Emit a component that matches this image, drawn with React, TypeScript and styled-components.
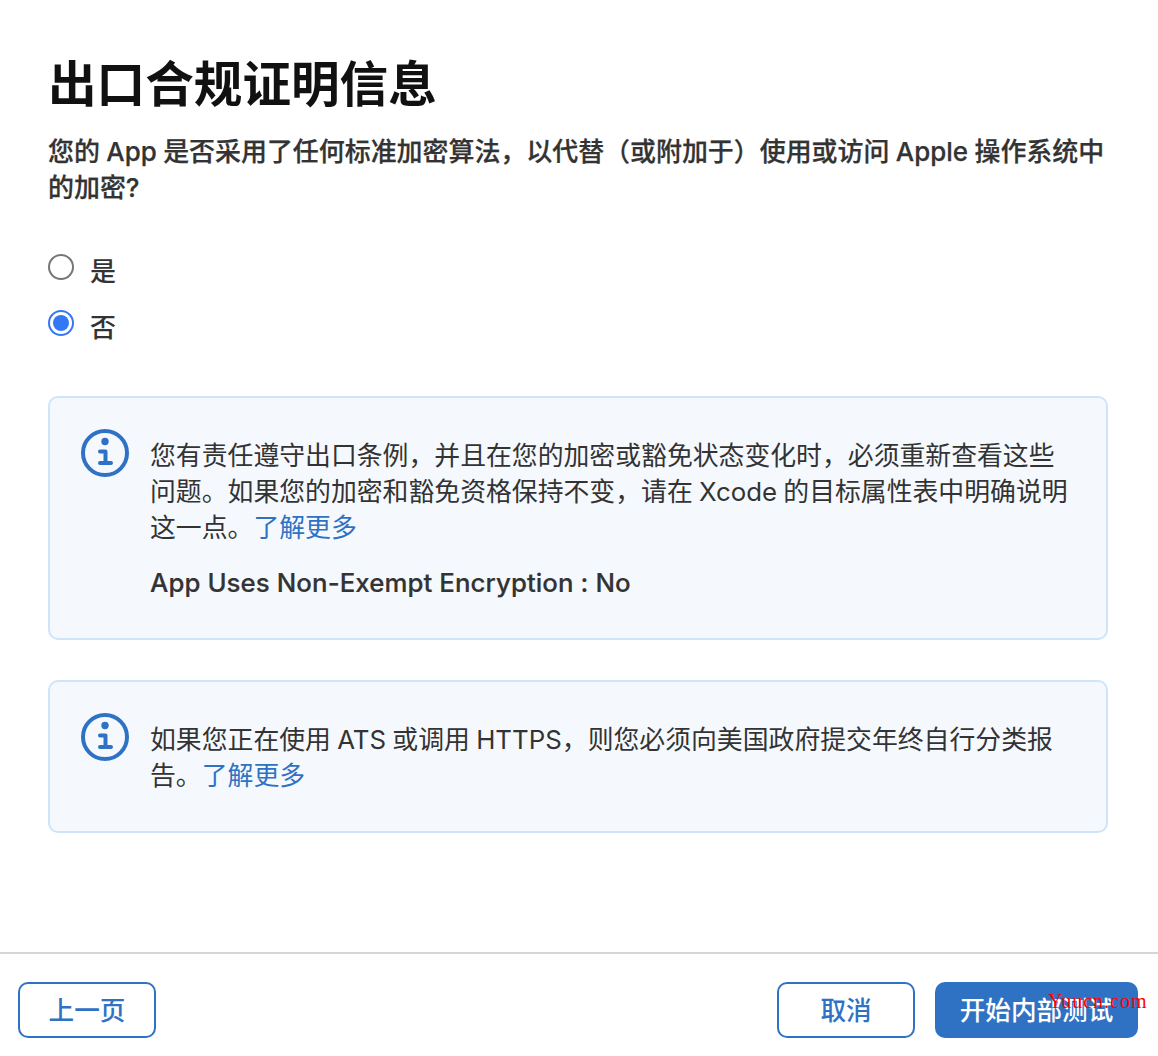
import React from 'react';
import styled, { createGlobalStyle } from 'styled-components';

const Global = createGlobalStyle`
  html, body { margin: 0; padding: 0; background: #fff; }
  body { font-family: Inter, "Noto Sans CJK SC", "Liberation Sans", sans-serif; color: #333; }
`;

const Page = styled.div`
  position: relative;
  width: 1158px;
  height: 1056px;
  display: flex;
  flex-direction: column;
  overflow: hidden;
`;

const Content = styled.main`
  flex: 1;
  padding: 55px 50px 0 48px;
`;

const Title = styled.h1`
  margin: 0;
  font-size: 48.6px;
  line-height: 60px;
  font-weight: 700;
  color: #111;
`;

const Question = styled.p`
  margin: 19px 0 0;
  font-size: 25.95px;
  line-height: 36px;
  font-weight: 500;
  word-spacing: -0.5px;
  color: #333;
  -webkit-text-stroke: 0.25px #333;
`;

const Options = styled.div`
  margin-top: 49px;
  display: flex;
  flex-direction: column;
  gap: 28px;
`;

const Option = styled.label`
  display: flex;
  align-items: center;
  gap: 16px;
  height: 28px;
  font-size: 26px;
  font-weight: 500;
  color: #333;
`;

const Radio = styled.span<{ $checked?: boolean }>`
  box-sizing: border-box;
  width: 26px;
  height: 26px;
  border-radius: 50%;
  border: 2px solid ${(p) => (p.$checked ? '#3478f6' : '#767676')};
  display: flex;
  align-items: center;
  justify-content: center;
  margin-top: -4px;
  &::after {
    content: '';
    display: ${(p) => (p.$checked ? 'block' : 'none')};
    width: 16px;
    height: 16px;
    border-radius: 50%;
    background: #3478f6;
  }
`;

const Notice = styled.section<{ $first?: boolean }>`
  box-sizing: border-box;
  margin-top: ${(p) => (p.$first ? '57px' : '40px')};
  display: flex;
  gap: 21px;
  padding: 31px 32px 37px 31px;
  background: #f5f9fe;
  border: 2px solid #cfe4fa;
  border-radius: 10px;
`;

const IconBox = styled.svg`
  flex: none;
  width: 48px;
  height: 48px;
  color: #2f72c4;
`;

const NoticeBody = styled.div`
  padding-top: 9px;
  font-size: 25.85px;
  line-height: 36px;
  word-spacing: -1px;
  color: #333;
`;

const Para = styled.p`
  margin: 0;
  & + & {
    margin-top: 19px;
    font-weight: 500;
    word-spacing: 0;
    letter-spacing: 0.06px;
    -webkit-text-stroke: 0.2px #333;
  }
`;

const LearnMore = styled.a`
  color: #2f72c4;
  text-decoration: none;
`;

const Footer = styled.footer`
  flex: none;
  height: 104px;
  box-sizing: border-box;
  border-top: 2px solid #d6d6d6;
  padding: 28px 20px 0 18px;
  display: flex;
  align-items: flex-start;
  justify-content: space-between;
`;

const Group = styled.div`
  display: flex;
  gap: 20px;
`;

const Button = styled.button<{ $primary?: boolean; $width: number }>`
  box-sizing: border-box;
  width: ${(p) => p.$width}px;
  height: 56px;
  border-radius: 10px;
  border: 2px solid #2f72c4;
  background: ${(p) => (p.$primary ? '#2f72c4' : '#fff')};
  color: ${(p) => (p.$primary ? '#fff' : '#2f72c4')};
  font-family: inherit;
  font-size: 25.6px;
  font-weight: 500;
  padding: 0 0 4px;
`;

const Watermark = styled.span`
  position: absolute;
  left: 1048px;
  top: 991px;
  font-family: "Liberation Serif", serif;
  font-size: 20px;
  letter-spacing: 1px;
  line-height: 20px;
  color: #f00;
`;

const InfoIcon = () => (
  <IconBox viewBox="0 0 48 48" fill="none" aria-hidden="true">
    <circle cx="24" cy="24" r="22" stroke="currentColor" strokeWidth="4" />
    <circle cx="24" cy="12.5" r="3.7" fill="currentColor" />
    <path d="M19 22.5H24.5V33.5M19 34H30" stroke="currentColor" strokeWidth="4" strokeLinecap="round" strokeLinejoin="round" />
  </IconBox>
);

export default function App() {
  return (
    <Page>
      <Global />
      <Content>
        <Title>出口合规证明信息</Title>
        <Question>您的 App 是否采用了任何标准加密算法，以代替（或附加于）使用或访问 Apple 操作系统中的加密?</Question>
        <Options>
          <Option><Radio />是</Option>
          <Option><Radio $checked />否</Option>
        </Options>
        <Notice $first>
          <InfoIcon />
          <NoticeBody>
            <Para>您有责任遵守出口条例，并且在您的加密或豁免状态变化时，必须重新查看这些问题。如果您的加密和豁免资格保持不变，请在 Xcode 的目标属性表中明确说明这一点。<LearnMore href="#">了解更多</LearnMore></Para>
            <Para>App Uses Non-Exempt Encryption : No</Para>
          </NoticeBody>
        </Notice>
        <Notice>
          <InfoIcon />
          <NoticeBody>
            <Para>如果您正在使用 ATS 或调用 HTTPS，则您必须向美国政府提交年终自行分类报告。<LearnMore href="#">了解更多</LearnMore></Para>
          </NoticeBody>
        </Notice>
      </Content>
      <Footer>
        <Button $width={138}>上一页</Button>
        <Group>
          <Button $width={138}>取消</Button>
          <Button $primary $width={203}>开始内部测试</Button>
        </Group>
      </Footer>
      <Watermark>Yuucn.com</Watermark>
    </Page>
  );
}
